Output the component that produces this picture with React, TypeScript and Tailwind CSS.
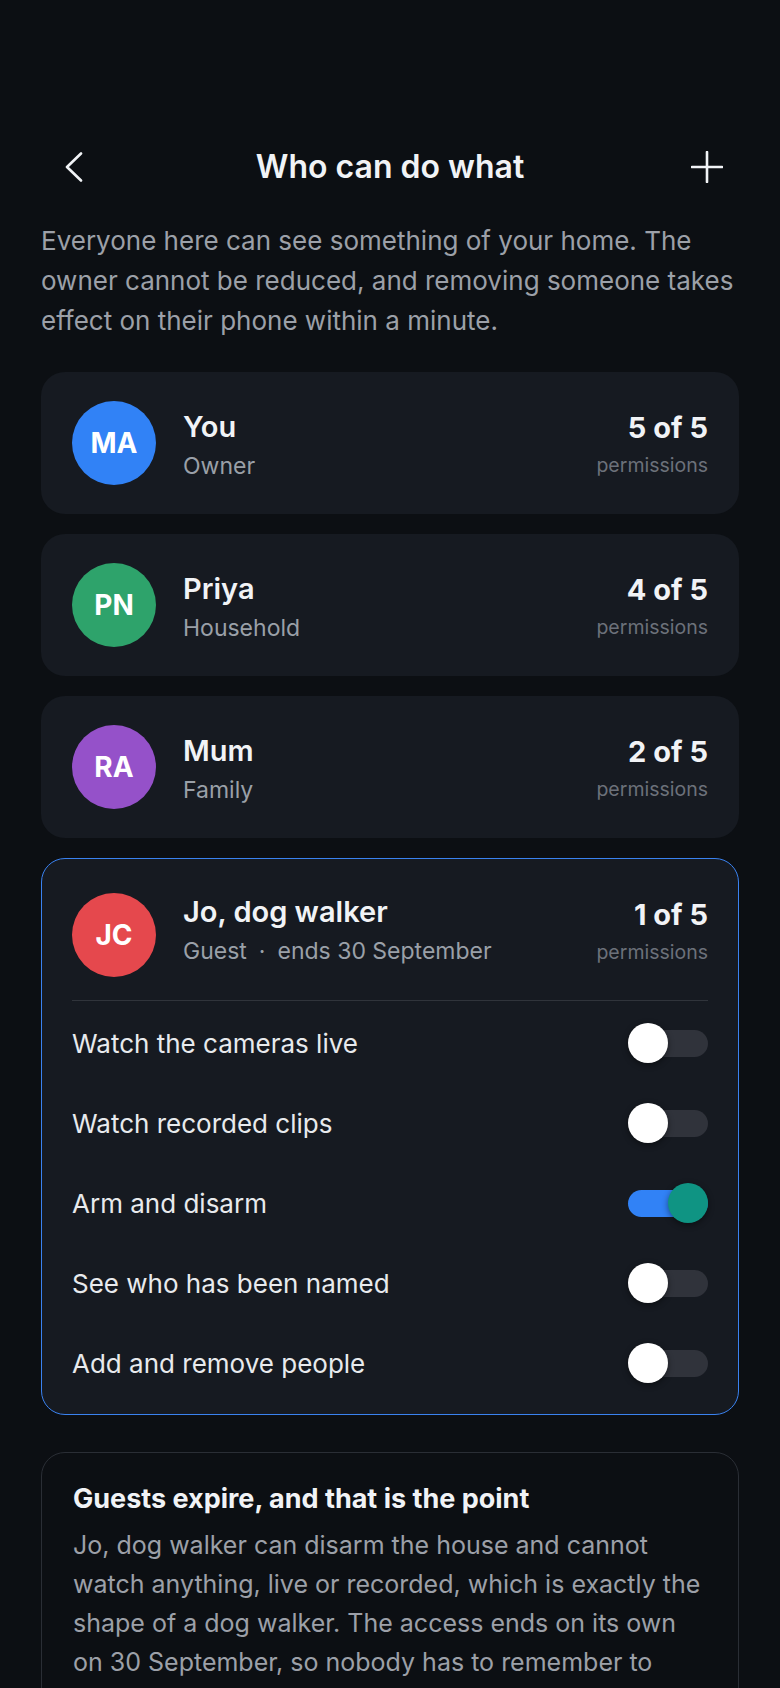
import { useState } from 'react';

// ─── Dados ───────────────────────────────────────────────────────────────────

type Member = {
  initials: string;
  name: string;
  role: string;
  ends?: string;
  count: number;
  avatar: string;
};

const MEMBERS: Member[] = [
  { initials: 'MA', name: 'You', role: 'Owner', count: 5, avatar: 'bg-[#3182f6]' },
  { initials: 'PN', name: 'Priya', role: 'Household', count: 4, avatar: 'bg-[#2ea36b]' },
  { initials: 'RA', name: 'Mum', role: 'Family', count: 2, avatar: 'bg-[#9551c9]' },
];

const GUEST: Member = {
  initials: 'JC',
  name: 'Jo, dog walker',
  role: 'Guest',
  ends: 'ends 30 September',
  count: 1,
  avatar: 'bg-[#e5484d]',
};

const PERMISSIONS = [
  'Watch the cameras live',
  'Watch recorded clips',
  'Arm and disarm',
  'See who has been named',
  'Add and remove people',
];

// ─── Peças ───────────────────────────────────────────────────────────────────

function MemberHeader({ m, raised }: { m: Member; raised?: boolean }) {
  return (
    <div className="flex items-center">
      <div
        className={`flex h-[84px] w-[84px] shrink-0 items-center justify-center rounded-full ${m.avatar} text-[28px] font-bold text-white`}
      >
        {m.initials}
      </div>
      <div className={`ml-[27px] flex min-w-0 flex-col ${raised ? 'mb-[10px]' : 'mt-[4px]'}`}>
        <span className="text-[29px] leading-[38px] font-semibold text-[#f1f3f6]">{m.name}</span>
        <span className="mt-[4px] text-[23px] leading-[32px] text-[#9aa0a8]">
          {m.role}
          {m.ends && (
            <>
              <span className="mx-[12px]">·</span>
              {m.ends}
            </>
          )}
        </span>
      </div>
      <div className={`ml-auto flex flex-col items-end ${raised ? 'mb-[8px]' : 'mt-[3px]'}`}>
        <span className="text-[29px] leading-[38px] font-bold text-[#f1f3f6]">{m.count} of 5</span>
        <span className="mt-[3px] text-[19.5px] leading-[30px] text-[#6c717a]">permissions</span>
      </div>
    </div>
  );
}

function Toggle({ on, onChange }: { on: boolean; onChange: () => void }) {
  return (
    <button
      onClick={onChange}
      className={`relative flex h-[27px] w-[80px] items-center rounded-full ${on ? 'bg-[#3182f6]' : 'bg-[#30333b]'}`}
    >
      <span
        className={`absolute top-1/2 h-[40px] w-[40px] -translate-y-1/2 rounded-full shadow-[0_2px_6px_rgba(0,0,0,0.45)] ${
          on ? 'right-0 bg-[#0f9483]' : 'left-0 bg-white'
        }`}
      />
    </button>
  );
}

// ─── Tela ────────────────────────────────────────────────────────────────────

export default function App() {
  const [perms, setPerms] = useState([false, false, true, false, false]);

  return (
    <div className="min-h-screen bg-[#0c0f13] px-[41px] pt-[139px] pb-10 font-['Inter','Noto_Sans',sans-serif]">
      {/* Cabeçalho */}
      <div className="flex h-14 items-center justify-between px-[24px]">
        <svg width="18" height="30" viewBox="0 0 18 30" fill="none">
          <path d="M16 1.5 2 15l14 13.5" stroke="#f1f3f6" strokeWidth="2.6" strokeLinecap="round" strokeLinejoin="round" />
        </svg>
        <h1 className="ml-[6px] text-[32px] font-semibold text-[#f1f3f6]">Who can do what</h1>
        <svg width="32" height="32" viewBox="0 0 32 32" fill="none" className="mr-[-8px]">
          <path d="M16 1v30M1 16h30" stroke="#f1f3f6" strokeWidth="2.6" strokeLinecap="round" />
        </svg>
      </div>

      <p className="mt-[26px] text-[26px] leading-[40px] text-[#9ca0a8]">
        Everyone here can see something of your home. The owner cannot be reduced, and removing someone takes
        effect on their phone within a minute.
      </p>

      {/* Membros */}
      <div className="mt-[31px] flex flex-col gap-[20px]">
        {MEMBERS.map((m) => (
          <div key={m.initials} className="rounded-[24px] bg-[#161a21] px-[31px] py-[29px]">
            <MemberHeader m={m} />
          </div>
        ))}

        <div className="rounded-[24px] border-[1.5px] border-[#3a82f0] bg-[#161a21] px-[30px] pt-[34px] pb-[11px]">
          <MemberHeader m={GUEST} raised />
          <div className="mt-[23px] h-px bg-[#30343b]" />
          <div className="mt-[2px] flex flex-col">
            {PERMISSIONS.map((p, i) => (
              <div key={p} className="flex h-[80px] items-center justify-between">
                <span className="text-[26px] text-[#e8eaed]">{p}</span>
                <Toggle
                  on={perms[i]}
                  onChange={() => setPerms((s) => s.map((v, j) => (j === i ? !v : v)))}
                />
              </div>
            ))}
          </div>
        </div>
      </div>

      {/* Nota */}
      <div className="mt-[37px] rounded-[24px] border border-[#2a2e35] px-[31px] pt-[30px] pb-[32px]">
        <h2 className="text-[27px] leading-[32px] font-bold text-[#f1f3f6]">Guests expire, and that is the point</h2>
        <p className="mt-[11px] text-[25px] leading-[39px] text-[#9ca0a8]">
          Jo, dog walker can disarm the house and cannot watch anything, live or recorded, which is exactly the
          shape of a dog walker. The access ends on its own on 30 September, so nobody has to remember to take it
          away.
        </p>
      </div>
    </div>
  );
}
